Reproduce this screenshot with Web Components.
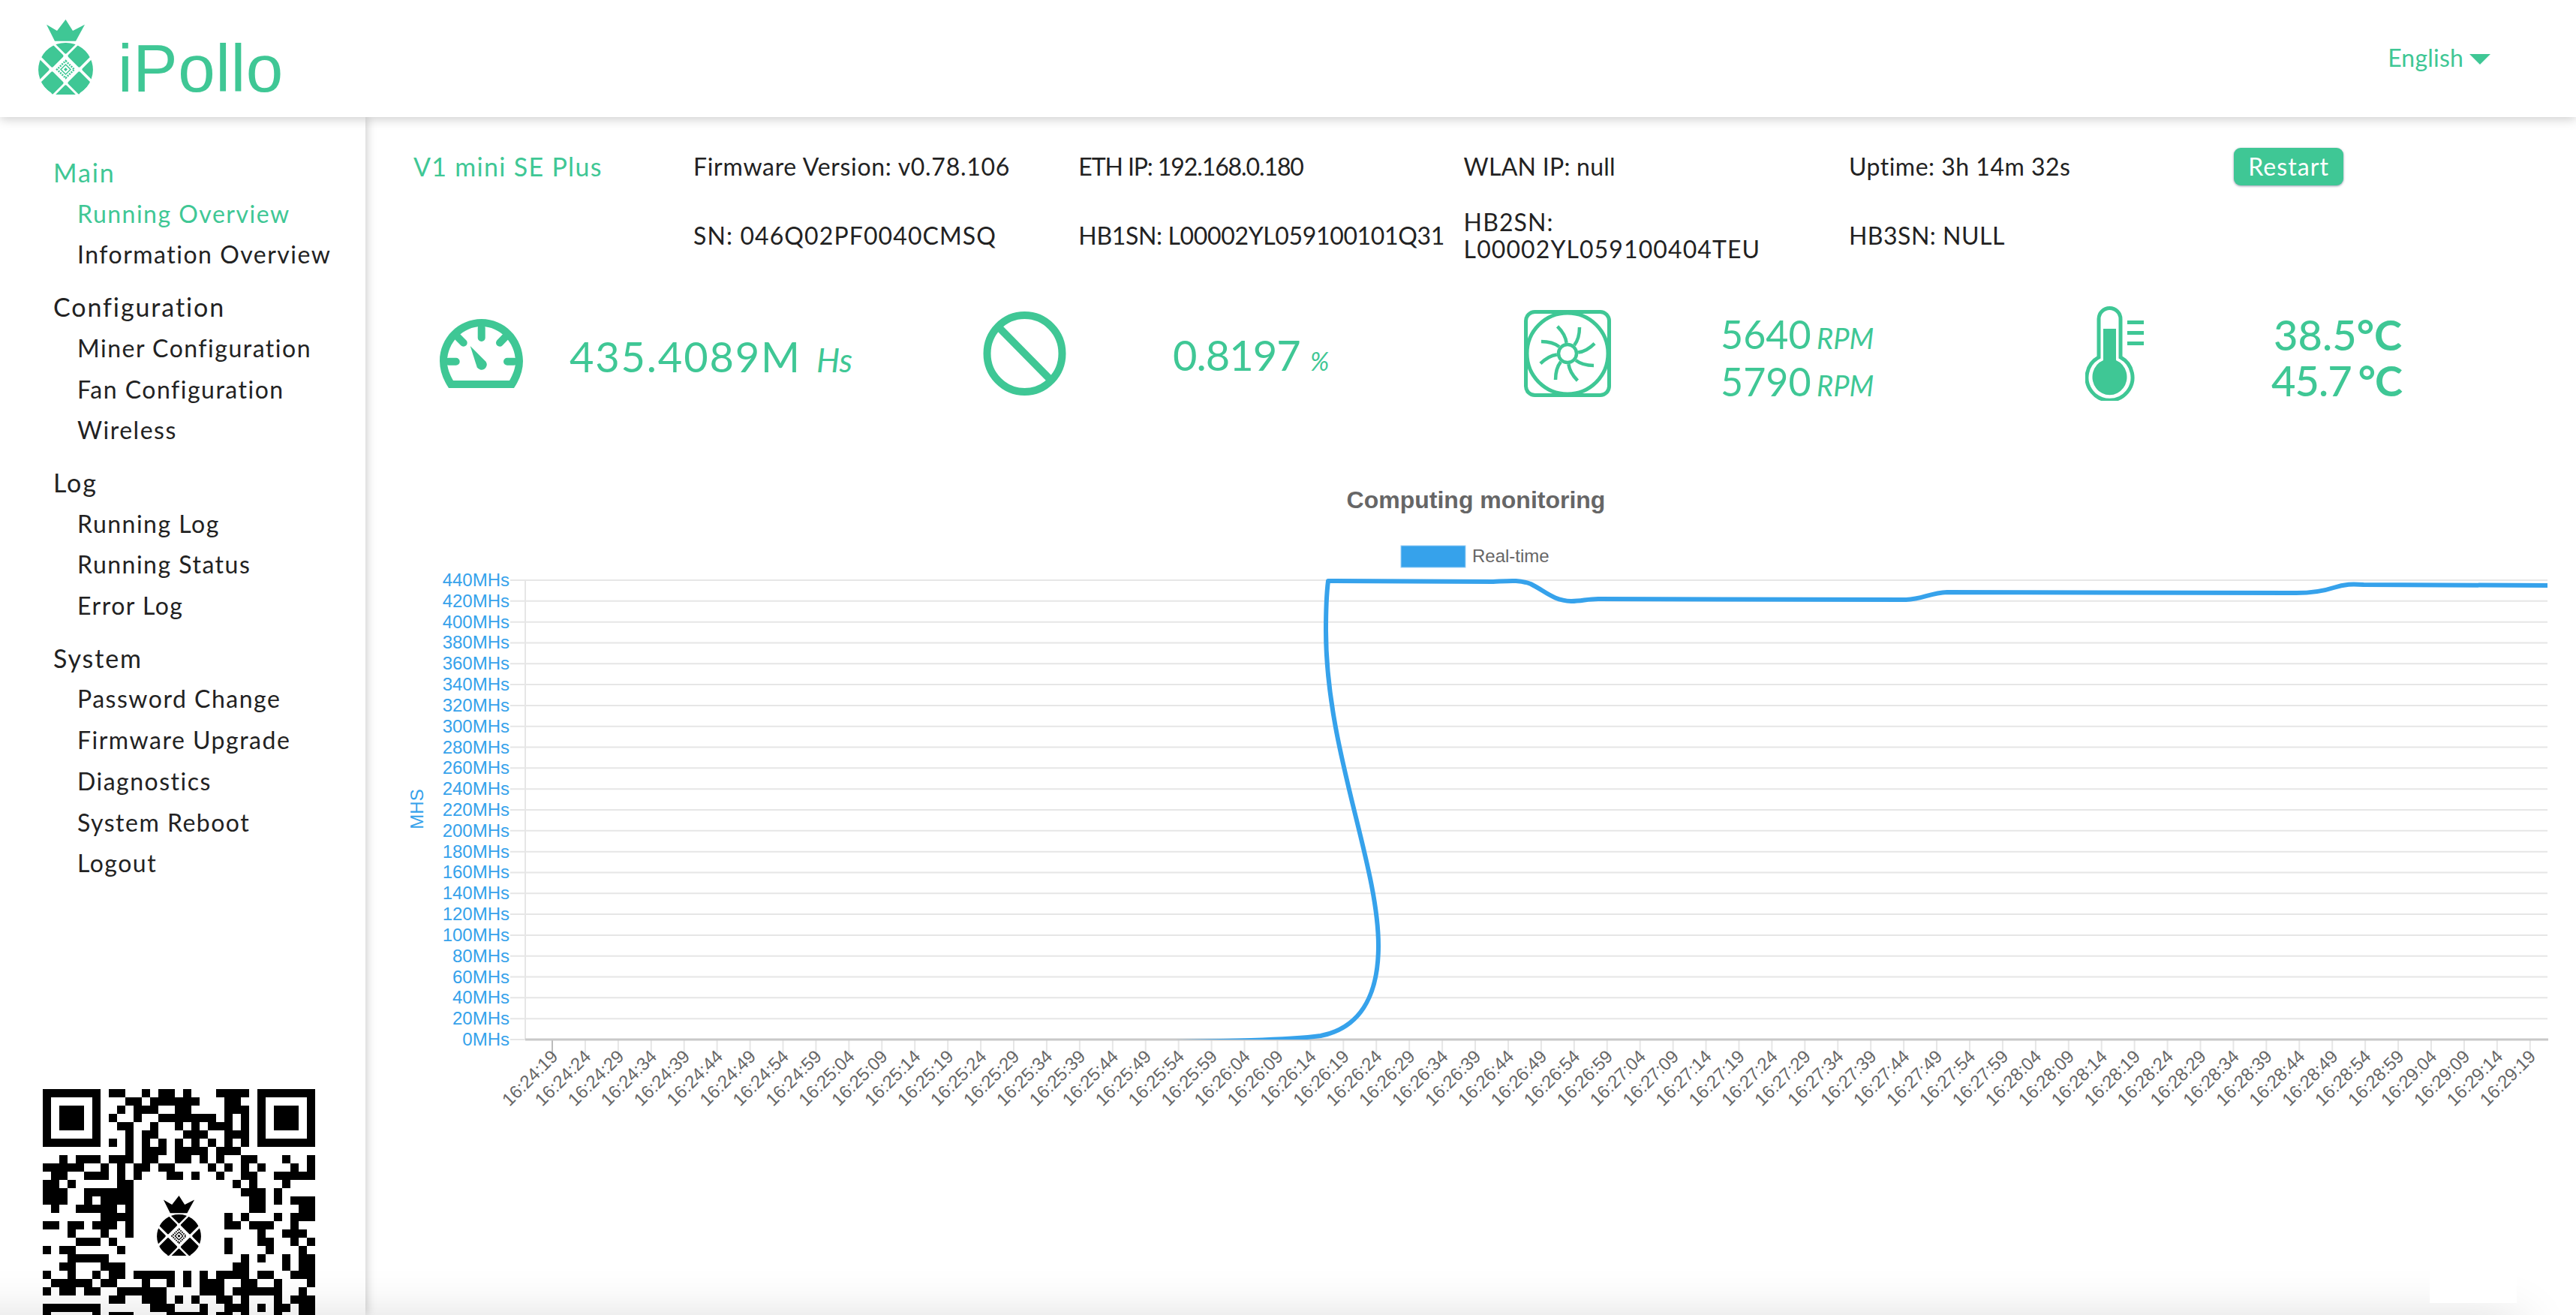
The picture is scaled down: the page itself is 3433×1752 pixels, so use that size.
<!DOCTYPE html>
<html>
<head>
<meta charset="utf-8">
<title>iPollo</title>
<style>
  html, body { margin: 0; padding: 0; height: 100%; overflow: hidden; background: #fff; }
  body { font-family: Lato, "Liberation Sans", sans-serif; color: #222; }
</style>
</head>
<body>
<ipollo-app>
  <top-bar slot="top"></top-bar>
  <side-menu slot="side"></side-menu>
  <info-panel slot="main"></info-panel>
  <stats-row slot="main">
    <stat-block style="--icon-left:34px;--icon-w:111px;--val-left:62px;--val-top:12px">
      <svg slot="icon" width="111" height="92" viewBox="0 0 111 92" fill="currentColor">
        <path fill-rule="evenodd" d="M12 92C4 80 0 68 0 56 0 25 25 0 55.700 0S111 25 111 56c0 12-4 24-12 36ZM18 82H93c5-9 8-17 8-25C101 31 80 10 55.700 10S10 31 10 57c0 8 3 16 8 25Z"/>
        <path stroke="currentColor" stroke-width="10" stroke-linecap="round" d="M55.700 12V25M23 23 31.700 31.700M88.400 23 80 31.700M12 56.700H21.700M99 56.700H90"/>
        <path d="M40.700 36 61.700 57A7 7 0 1 1 49.700 64.300Z"/>
      </svg>
      <big-val>435.4089M <em>Hs</em></big-val>
    </stat-block>
    <stat-block style="--icon-left:37px;--icon-w:111px;--val-left:142px;--val-top:12px">
      <svg slot="icon" width="111" height="112" viewBox="0 0 111 112" fill="none" stroke="currentColor" stroke-width="10">
        <ellipse cx="55.500" cy="56" rx="50" ry="51"/>
        <path d="M20 20 91 92"/>
      </svg>
      <big-val style="letter-spacing:-1px">0.8197 <em style="font-size:34px;margin-left:0">%</em></big-val>
    </stat-block>
    <stat-block style="--icon-left:37px;--icon-w:116px;--val-left:146px;--val-top:16px">
      <svg slot="icon" width="116" height="116" viewBox="0 0 116 116" fill="none" stroke="currentColor">
        <rect x="2.500" y="2.500" width="111" height="111" rx="12" stroke-width="5"/>
        <circle cx="58" cy="58" r="54" stroke-width="5"/>
        <circle cx="58" cy="58" r="12" stroke-width="4.500"/>
        <g stroke-width="4.500" id="blades"></g>
      </svg>
      <small-val>
        <div>5640 <em>RPM</em></div>
        <div>5790 <em>RPM</em></div>
      </small-val>
    </stat-block>
    <stat-block style="--icon-left:64px;--icon-w:78px;--val-left:170px;--val-top:10px">
      <svg slot="icon" width="78" height="126" viewBox="0 0 78 126" fill="currentColor">
        <path fill="none" stroke="currentColor" stroke-width="5" d="M18 68V17a14.500 14.500 0 0 1 29 0V68a30.500 30.500 0 1 1-29 0Z"/>
        <path d="M24 30H41V72a23 24 0 1 1-17 0Z"/>
        <path d="M56 19H78V24H56ZM56 33H78V38H56ZM56 47H78V52H56Z"/>
      </svg>
      <temp-val>
        <div>38.5<b>°C</b></div>
        <div style="letter-spacing:-1px">45.7<b style="margin-left:9px">°C</b></div>
      </temp-val>
    </stat-block>
  </stats-row>
  <rate-chart slot="main"></rate-chart>
</ipollo-app>

<script>
const GREEN = '#3fc795';

// fan blades are the same stroke turned eight times
document.getElementById('blades').innerHTML = [0, 45, 90, 135, 180, 225, 270, 315]
  .map(a => `<path d="M67 47Q74 38 74 23" transform="rotate(${a} 58 58)"/>`).join('');

class PineLogo extends HTMLElement {
  constructor() {
    super();
    this.attachShadow({ mode: 'open' });
    const cells = [[18.5, 48.5], [54.5, 48.5], [18.5, 84.5], [54.5, 84.5], [-0.5, 66.5], [73.5, 66.5], [36.5, 30.5], [36.5, 102.5]];
    const rects = cells.map(([x, y]) =>
      `<rect x="${x - 11.2}" y="${y - 11.2}" width="22.4" height="22.4" rx="2" transform="rotate(45 ${x} ${y})"/>`).join('');
    this.shadowRoot.innerHTML = `
      <style>
        :host { display: block; line-height: 0; }
        svg { width: 100%; height: auto; display: block; }
      </style>
      <svg viewBox="0 0 73 100" fill="currentColor">
        <defs><clipPath id="body"><path d="M36.500 31A36 36 0 0 0 17 97.500L19 100H54L56 97.500A36 36 0 0 0 36.500 31Z"/></clipPath></defs>
        <path d="M36.500 0 46 15 62 6.700 50 28.700H22L11 6.700 25 15Z"/>
        <g clip-path="url(#body)">${rects}</g>
        <g fill="none" stroke="currentColor">
          <path d="M36.500 55 48 66.500 36.500 78 25 66.500Z" stroke-width="2.500" stroke-dasharray="2 1.400"/>
          <path d="M36.500 60 43 66.500 36.500 73 30 66.500Z" stroke-width="1.500"/>
        </g>
        <path d="M36.500 64 39 66.500 36.500 69 34 66.500Z"/>
      </svg>`;
  }
}
customElements.define('pine-logo', PineLogo);

class TopBar extends HTMLElement {
  constructor() {
    super();
    this.attachShadow({ mode: 'open' });
    this.shadowRoot.innerHTML = `
      <style>
        :host {
          display: flex; align-items: flex-start; justify-content: space-between;
          height: 156px; box-sizing: border-box; background: #fff; color: ${GREEN};
          box-shadow: 0 2px 14px rgba(0,0,0,.22); position: relative; z-index: 2;
        }
        .brand { display: flex; align-items: flex-start; padding: 26px 0 0 51px; }
        pine-logo { width: 73px; }
        .name { font: 89px/1 "Liberation Sans", Arial, sans-serif; margin: 21px 0 0 33px; letter-spacing: .5px; }
        .lang { display: flex; align-items: center; margin: 58px 114px 0 0; font-size: 32px; line-height: 38px; letter-spacing: .2px; }
        .lang svg { margin-left: 8px; margin-top: 3px; }
      </style>
      <div class="brand"><pine-logo></pine-logo><div class="name">iPollo</div></div>
      <div class="lang">English<svg width="28" height="14" viewBox="0 0 28 14"><path d="M0 0H28L14 14Z" fill="currentColor"/></svg></div>`;
  }
}
customElements.define('top-bar', TopBar);

class QrCode extends HTMLElement {
  constructor() {
    super();
    this.attachShadow({ mode: 'open' });
    // columns set in each row, read off the reference
    const rows = [
      [8,9,12,14,15,17,21,22,23,24],
      [10,11,13,14,15,16,17,18,22,23],
      [9,11,12,13,16,17,22,23,24],
      [8,11,14,15,16,17,18,19,20,22,24],
      [9,10,13,16,18,20,21,22,24],
      [10,12,13,17,18,19,22,23,24],
      [8,10,12,14,16,18,20,22,24],
      [10,12,13,14,16,17,18,19,21,22,23],
      [2,4,5,6,8,9,10,12,13,16,17,19,21,24,25,29,32],
      [0,1,2,3,4,7,9,11,12,14,15,20,22,24,26,30,32],
      [1,2,5,6,7,9,11,15,16,18,21,24,25,28,29,30,31,32],
      [0,1,3,9,10,23,25,29],
      [0,1,2,5,6,7,8,9,10,24,25,26,28],
      [0,1,2,5,7,8,9,10,25,26,28,30,31,32],
      [1,4,5,6,7,8,10,25,26,31,32],
      [7,8,9,10,22,24,28,30,31,32],
      [0,1,3,4,6,7,8,10,22,23,25,26,27,30],
      [3,7,10,26,29,30,31],
      [4,5,6,8,22,26,27,30,32],
      [0,2,3,9,22,27,31],
      [3,4,5,6,7,24,26,29,31,32],
      [2,3,7,8,9,23,24,29,31,32],
      [0,3,6,8,9,11,12,13,14,15,17,19,21,22,23,24,26,27,30,31,32],
      [1,2,3,4,5,7,8,12,15,17,19,20,21,24,25,28,32],
      [0,2,3,5,6,9,10,11,12,13,14,19,20,21,23,24,25,26,27,28,31],
      [8,9,12,13,14,16,18,21,22,24,28,30,31,32],
      [13,14,15,19,22,23,24,26,28,29,31,32],
      [8,9,10,15,16,17,18,19,21,22,24,28,31,32]
    ];
    let cells = '';
    rows.forEach((cols, y) => cols.forEach(x => { cells += `<rect x="${x}" y="${y}" width="1" height="1"/>`; }));
    const finder = (x, y) => `<path fill-rule="evenodd" d="M${x} ${y}h7v7h-7ZM${x + 1} ${y + 1}v5h5v-5Z"/><rect x="${x + 2}" y="${y + 2}" width="3" height="3"/>`;
    this.shadowRoot.innerHTML = `
      <style>
        :host { display: block; position: relative; width: 363px; height: 363px; }
        svg { display: block; }
        .badge {
          position: absolute; left: 121px; top: 122px; width: 120px; height: 120px;
          background: #fff; border-radius: 14px; color: #000;
          display: flex; align-items: center; justify-content: center;
        }
        pine-logo { width: 59px; }
      </style>
      <svg width="363" height="363" viewBox="0 0 33 33" shape-rendering="crispEdges">
        ${cells}${finder(0, 0)}${finder(26, 0)}${finder(0, 26)}
      </svg>
      <div class="badge"><pine-logo></pine-logo></div>`;
  }
}
customElements.define('qr-code', QrCode);

class SideMenu extends HTMLElement {
  constructor() {
    super();
    this.attachShadow({ mode: 'open' });
    const groups = [
      ['Main', ['Running Overview', 'Information Overview']],
      ['Configuration', ['Miner Configuration', 'Fan Configuration', 'Wireless']],
      ['Log', ['Running Log', 'Running Status', 'Error Log']],
      ['System', ['Password Change', 'Firmware Upgrade', 'Diagnostics', 'System Reboot', 'Logout']]
    ];
    const html = groups.map(([title, items], g) => `
      <section>
        <h3 class="${g === 0 ? 'on' : ''}">${title}</h3>
        ${items.map(i => `<a class="${i === 'Running Overview' ? 'on' : ''}">${i}</a>`).join('')}
      </section>`).join('');
    this.shadowRoot.innerHTML = `
      <style>
        :host {
          display: block; width: 487px; height: 1596px; box-sizing: border-box; flex: none;
          padding: 47px 0 0 71px; background: #fff; color: #222;
          box-shadow: 2px 0 12px rgba(0,0,0,.2); position: relative; z-index: 1;
          overflow: hidden;
        }
        nav { height: 1248px; }
        section { margin-bottom: 15px; }
        h3 { margin: 0; font-weight: 400; font-size: 34px; line-height: 54.700px; letter-spacing: 1.900px; }
        a { display: block; margin-left: 32px; font-size: 32px; line-height: 54.700px; letter-spacing: 1.500px; }
        .on { color: ${GREEN}; }
        qr-code { margin-left: -14px; }
      </style>
      <nav>${html}</nav>
      <qr-code></qr-code>`;
  }
}
customElements.define('side-menu', SideMenu);

class InfoPanel extends HTMLElement {
  constructor() {
    super();
    this.attachShadow({ mode: 'open' });
    this.shadowRoot.innerHTML = `
      <style>
        :host {
          display: grid; grid-template-columns: 373px repeat(5, 513.300px);
          grid-template-rows: 92px 92px; margin-top: 20px; margin-left: 64px;
          font-size: 32px; line-height: 36px; letter-spacing: 1.100px; color: #222;
        }
        div { align-self: center; white-space: nowrap; }
        .model { color: ${GREEN}; font-size: 34px; letter-spacing: 1.300px; }
        button {
          justify-self: start; align-self: center; width: 146px; height: 50px;
          border: 0; border-radius: 9px; background: ${GREEN}; color: #fff;
          font: inherit; letter-spacing: 1.100px; padding: 0;
          box-shadow: 0 1px 3px rgba(40,50,90,.5);
        }
      </style>
      <div class="model">V1 mini SE Plus</div>
      <div style="letter-spacing:.7px">Firmware Version: v0.78.106</div>
      <div style="letter-spacing:-1.100px">ETH IP: 192.168.0.180</div>
      <div style="letter-spacing:.25px">WLAN IP: null</div>
      <div style="letter-spacing:.5px">Uptime: 3h 14m 32s</div>
      <button>Restart</button>
      <div></div>
      <div>SN: 046Q02PF0040CMSQ</div>
      <div style="letter-spacing:-.35px">HB1SN: L00002YL059100101Q31</div>
      <div>HB2SN:<br>L00002YL059100404TEU</div>
      <div style="letter-spacing:.5px">HB3SN: NULL</div>
      <div></div>`;
  }
}
customElements.define('info-panel', InfoPanel);

class StatsRow extends HTMLElement {
  constructor() {
    super();
    this.attachShadow({ mode: 'open' });
    this.shadowRoot.innerHTML = `
      <style>
        :host {
          display: grid; grid-template-columns: repeat(4, 721px);
          margin-left: 65px; height: 260px; align-items: start; color: ${GREEN};
        }
      </style>
      <slot></slot>`;
  }
}
customElements.define('stats-row', StatsRow);

class StatBlock extends HTMLElement {
  constructor() {
    super();
    this.attachShadow({ mode: 'open' });
    this.shadowRoot.innerHTML = `
      <style>
        :host { display: flex; align-items: center; height: 126px; margin-top: 48px; padding-left: var(--icon-left); }
        .icon { width: var(--icon-w); display: flex; justify-content: center; }
        .val { margin-left: var(--val-left); margin-top: var(--val-top); }
      </style>
      <div class="icon"><slot name="icon"></slot></div>
      <div class="val"><slot></slot></div>`;
  }
}
customElements.define('stat-block', StatBlock);

class BigVal extends HTMLElement {
  constructor() {
    super();
    this.attachShadow({ mode: 'open' });
    this.shadowRoot.innerHTML = `
      <style>
        :host { display: block; font-size: 56px; line-height: 64px; white-space: nowrap; letter-spacing: 1.800px; }
        ::slotted(em) { font-size: 44px; font-style: italic; margin-left: 4px; letter-spacing: 0; }
      </style>
      <slot></slot>`;
  }
}
customElements.define('big-val', BigVal);

class SmallVal extends HTMLElement {
  constructor() {
    super();
    this.attachShadow({ mode: 'open' });
    this.shadowRoot.innerHTML = `
      <style>
        :host { display: block; text-align: right; font-size: 52px; line-height: 58px; white-space: nowrap; }
      </style>
      <slot></slot>`;
    this.querySelectorAll('em').forEach(e => { e.style.fontSize = '38px'; e.style.marginLeft = '-6px'; });
  }
}
customElements.define('small-val', SmallVal);

class TempVal extends HTMLElement {
  constructor() {
    super();
    this.attachShadow({ mode: 'open' });
    this.shadowRoot.innerHTML = `
      <style>
        :host { display: block; text-align: right; font-size: 56px; line-height: 61px; white-space: nowrap; font-weight: 500; }
      </style>
      <slot></slot>`;
  }
}
customElements.define('temp-val', TempVal);

class RateChart extends HTMLElement {
  constructor() {
    super();
    this.attachShadow({ mode: 'open' });
    const top = 773, bottom = 1385, left = 700, right = 3395;
    const step = (bottom - top) / 22;
    let grid = '', ylabels = '';
    for (let i = 0; i <= 22; i++) {
      const y = top + i * step;
      if (i < 22) grid += `<path d="M680 ${y}H${right}" stroke="#e6e6e6" stroke-width="2"/>`;
      else grid += `<path d="M680 ${y}H700" stroke="#e6e6e6" stroke-width="2"/>`;
      ylabels += `<text x="679" y="${y + 8}" text-anchor="end" fill="#36a2eb">${(22 - i) * 20}MHs</text>`;
    }
    let xticks = '', xlabels = '';
    for (let i = 0; i <= 60; i++) {
      const x = 736 + i * 43.93;
      const secs = 16 * 3600 + 24 * 60 + 19 + i * 5;
      const mm = String(Math.floor(secs / 60) % 60).padStart(2, '0');
      const ss = String(secs % 60).padStart(2, '0');
      xticks += `<path d="M${x} ${bottom}V${bottom + 19}" stroke="${i ? '#e6e6e6' : '#bbb'}" stroke-width="2"/>`;
      xlabels += `<text transform="translate(${x + 9} 1409) rotate(-45)" text-anchor="end" fill="#666">16:${mm}:${ss}</text>`;
    }
    this.shadowRoot.innerHTML = `
      <style>
        :host { display: block; margin-left: 0; width: 2946px; height: 1132px; }
        svg { display: block; font: 24px "Liberation Sans", Arial, sans-serif; }
      </style>
      <svg width="2946" height="1132" viewBox="487 620 2946 1132">
        <defs><clipPath id="plot"><rect x="${left}" y="${top - 10}" width="${right - left}" height="${bottom - top + 10}"/></clipPath></defs>
        <text x="1967" y="677" text-anchor="middle" fill="#666" style="font-size:32px;font-weight:700">Computing monitoring</text>
        <rect x="1867" y="727" width="86" height="29" fill="#36a2eb" stroke="#9dd0f5" stroke-width="1"/>
        <text x="1962" y="749" fill="#666">Real-time</text>
        ${grid}
        <path d="M${left} ${top}V${bottom}" stroke="#e6e6e6" stroke-width="2"/>
        ${xticks}
        <path d="M${left} ${bottom}H${right + 1}" stroke="#c8c8c8" stroke-width="3"/>
        ${ylabels}
        <text transform="translate(564 1078) rotate(-90)" text-anchor="middle" fill="#36a2eb">MHS</text>
        <path clip-path="url(#plot)" fill="none" stroke="#36a2eb" stroke-width="6" stroke-linejoin="round"
          d="M1500 1389C1640 1387 1715 1386 1760 1380 1810 1370 1837 1330 1837 1260 1837 1150 1767 1000 1767 840 1767 805 1768 790 1770 774
             L1990 775C2010 774 2025 772 2040 778 2060 788 2070 800 2094 801 2108 801 2115 798 2130 798
             L2535 799C2560 800 2570 790 2595 789 L3060 790C3080 790 3095 788 3110 783 3125 778 3135 778 3150 779L3395 780"/>
        ${xlabels}
      </svg>`;
  }
}
customElements.define('rate-chart', RateChart);

class IpolloApp extends HTMLElement {
  constructor() {
    super();
    this.attachShadow({ mode: 'open' });
    this.shadowRoot.innerHTML = `
      <style>
        :host { display: block; position: relative; width: 3433px; height: 1752px; overflow: hidden; background: #fff; }
        .body { display: flex; height: 1596px; }
        .main { flex: 1; min-width: 0; }
        /* page bottom: shadow of something below the fold, with a white chip over it */
        .fade {
          position: absolute; left: -100px; width: 3450px; top: 1770px; height: 60px;
          box-shadow: 0 0 70px 10px rgba(0,0,0,.16); background: #ddd; z-index: 3; pointer-events: none;
        }
        .chip { position: absolute; left: 3238px; top: 1680px; width: 116px; height: 56px; background: #fff; z-index: 4; }
      </style>
      <slot name="top"></slot>
      <div class="body">
        <slot name="side"></slot>
        <div class="main"><slot name="main"></slot></div>
      </div>
      <div class="fade"></div>
      <div class="chip"></div>`;
  }
}
customElements.define('ipollo-app', IpolloApp);
</script>
</body>
</html>
